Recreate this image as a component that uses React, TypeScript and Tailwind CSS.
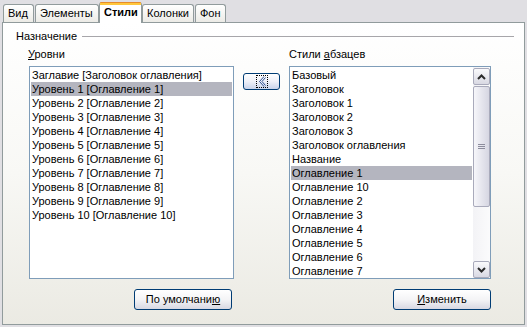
import React from "react";

const levels = [
  "Заглавие [Заголовок оглавления]",
  "Уровень 1 [Оглавление 1]",
  "Уровень 2 [Оглавление 2]",
  "Уровень 3 [Оглавление 3]",
  "Уровень 4 [Оглавление 4]",
  "Уровень 5 [Оглавление 5]",
  "Уровень 6 [Оглавление 6]",
  "Уровень 7 [Оглавление 7]",
  "Уровень 8 [Оглавление 8]",
  "Уровень 9 [Оглавление 9]",
  "Уровень 10 [Оглавление 10]",
];

const styles = [
  "Базовый",
  "Заголовок",
  "Заголовок 1",
  "Заголовок 2",
  "Заголовок 3",
  "Заголовок оглавления",
  "Название",
  "Оглавление 1",
  "Оглавление 10",
  "Оглавление 2",
  "Оглавление 3",
  "Оглавление 4",
  "Оглавление 5",
  "Оглавление 6",
  "Оглавление 7",
];

function Tab({ label, width, active, className = "" }: { label: string; width: string; active?: boolean; className?: string }) {
  if (active) {
    return (
      <div className={`relative z-10 -mb-px h-[21px] ${width} ${className} rounded-t-[3px] border-x border-[#919b9c] bg-white`}>
        <div className="h-px rounded-t-[3px] bg-[#e68b2c]" />
        <div className="h-[2px] bg-[#ffc73c]" />
        <div className="pl-[4px] pt-[1px] font-bold leading-[13px]">{label}</div>
      </div>
    );
  }
  return (
    <div className={`h-[18px] ${width} ${className} rounded-t-[3px] border-x border-t border-[#919b9c] bg-gradient-to-b from-white to-[#ecebe6] pl-[4px] pt-[2px] leading-[13px]`}>
      {label}
    </div>
  );
}

function Button({ children, className = "" }: { children: React.ReactNode; className?: string }) {
  return (
    <div className={`flex h-[21px] w-[98px] items-center justify-center rounded-[3px] border border-[#003c74] bg-gradient-to-b from-white via-[#f4f4f6] to-[#d8d8e2] ${className}`}>
      {children}
    </div>
  );
}

function Arrow({ up }: { up?: boolean }) {
  return (
    <div className="flex h-[17px] w-[17px] items-center justify-center rounded-[2px] border border-[#a9aabb] bg-gradient-to-b from-[#fafafc] to-[#d9d9e3]">
      <svg width="9" height="6" viewBox="0 0 9 6">
        <path d={up ? "M1 5 L4.5 1.5 L8 5" : "M1 1 L4.5 4.5 L8 1"} fill="none" stroke="#2a2a2a" strokeWidth="2" />
      </svg>
    </div>
  );
}

export default function App() {
  return (
    <div className="h-[327px] w-[527px] overflow-hidden bg-[#e0dfe3] font-['Liberation_Sans',sans-serif] text-[11px] text-black">
      <div className="flex h-[22px] items-end pl-[3px]">
        <Tab label="Вид" width="w-[31px]" />
        <Tab label="Элементы" width="w-[64px]" className="ml-[1px]" />
        <Tab label="Стили" width="w-[43px]" active />
        <Tab label="Колонки" width="w-[52px]" />
        <Tab label="Фон" width="w-[31px]" className="ml-[1px]" />
      </div>

      <div className="ml-[2px] h-[303px] w-[523px] border border-[#919b9c] bg-gradient-to-b from-white via-[#f8f8f5] to-[#ebeae3]">
        <div className="ml-[13px] mr-[10px] mt-[7px] flex h-[13px] items-center">
          <span className="leading-[13px]">Назначение</span>
          <div className="ml-[5px] h-px flex-1 bg-[#a7a6aa]" />
        </div>

        <div className="ml-[26px] mt-[5px] flex">
          <div className="flex w-[205px] flex-col">
            <div className="-ml-px h-[13px] leading-[13px]">
              <span className="underline">У</span>ровни
            </div>
            <div className="mt-[5px] h-[213px] border border-[#7f9db9] bg-white p-px">
              {levels.map((l, i) => (
                <div key={l} className={`h-[14px] whitespace-nowrap pl-px leading-[14px] ${i === 1 ? "bg-[#b4b5bf]" : ""}`}>
                  {l}
                </div>
              ))}
            </div>
            <div className="mt-[10px] flex justify-end pr-[2px]">
              <Button>
                По умолчани<span className="underline">ю</span>
              </Button>
            </div>
          </div>

          <div className="ml-[9px] mt-[25px]">
            <div className="flex h-[17px] w-[37px] items-center justify-center rounded-[3px] border border-[#003c74] bg-gradient-to-b from-white via-[#eef0f8] to-[#c9d3ea]">
              <div className="flex h-[13px] w-[12px] items-center justify-center border border-dotted border-black">
                <svg width="8" height="11" viewBox="0 0 8 11">
                  <path d="M6 0.5 L1.5 5.5 L6 10.5 M7.5 1.5 L4 5.5 L7.5 9.5" fill="none" stroke="#2e4f8f" strokeWidth="1" />
                </svg>
              </div>
            </div>
          </div>

          <div className="ml-[9px] flex w-[202px] flex-col">
            <div className="h-[13px] leading-[13px]">
              Стили <span className="underline">а</span>бзацев
            </div>
            <div className="mt-[5px] flex h-[213px] border border-[#7f9db9] bg-white">
              <div className="w-[182px] overflow-hidden pl-px pt-px">
                {styles.map((s, i) => (
                  <div key={s} className={`h-[14px] whitespace-nowrap pl-px leading-[14px] ${i === 7 ? "bg-[#b4b5bf]" : ""}`}>
                    {s}
                  </div>
                ))}
              </div>
              <div className="ml-px flex w-[17px] flex-col bg-gradient-to-r from-[#f3f3f6] to-[#fbfbfc] pt-px">
                <Arrow up />
                <div className="mt-px flex h-[121px] items-center justify-center rounded-[2px] border border-[#a9aabb] bg-gradient-to-r from-[#f6f6fa] to-[#d6d6e2]">
                  <div className="flex flex-col gap-[1px]">
                    <div className="h-px w-[7px] bg-[#8c8c9c]" />
                    <div className="h-px w-[7px] bg-[#8c8c9c]" />
                    <div className="h-px w-[7px] bg-[#8c8c9c]" />
                  </div>
                </div>
                <div className="flex-1" />
                <Arrow />
              </div>
            </div>
            <div className="mt-[10px] flex justify-end">
              <Button>
                <span className="underline">И</span>зменить
              </Button>
            </div>
          </div>
        </div>
      </div>
    </div>
  );
}
